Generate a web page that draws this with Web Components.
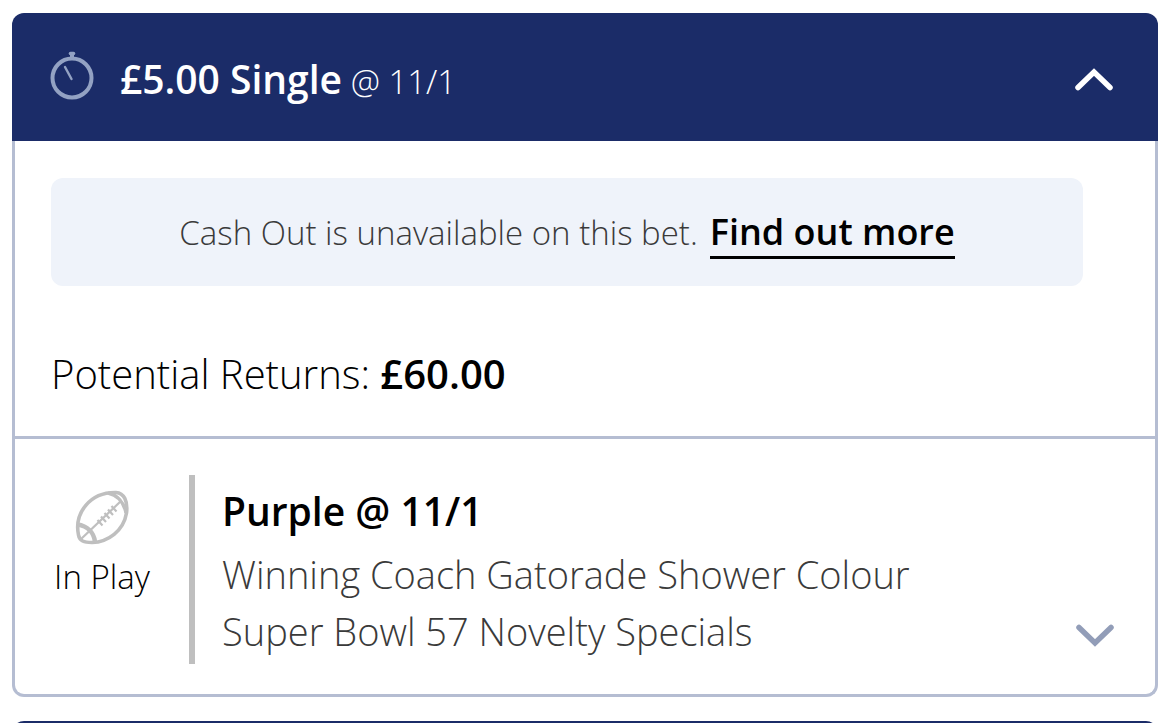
<!DOCTYPE html>
<html lang="en">
<head>
<meta charset="utf-8">
<meta name="viewport" content="width=device-width, initial-scale=1">
<title>My Bets</title>
<style>
    body {
        margin: 0;
        height: 100vh;
        overflow: hidden;
        background: #fff;
        color: #000;
        font-family: "Open Sans", "Noto Sans", sans-serif;
        font-weight: 300;
    }
    main {
        display: flex;
        flex-direction: column;
        gap: 24px;
        box-sizing: border-box;
        height: 100%;
        overflow: hidden;
        padding: 13px 11px 0 12px;
    }
    bet-card {
        flex: none;
    }
</style>
</head>
<body>
<main>
    <bet-card>
        <strong slot="stake">£5.00 Single</strong>
        <span slot="odds">@ 11/1</span>
        <cash-out-notice>
            Cash Out is unavailable on this bet.
            <span slot="action">Find out more</span>
        </cash-out-notice>
        <potential-returns>£60.00</potential-returns>
        <bet-selection slot="selection">
            <span slot="status">In Play</span>
            <span slot="pick">Purple @ 11/1</span>
            <span slot="market">Winning Coach Gatorade Shower Colour</span>
            <span slot="event">Super Bowl 57 Novelty Specials</span>
        </bet-selection>
    </bet-card>
    <bet-card></bet-card>
</main>
<script>
class BetCard extends HTMLElement {
    constructor(){
        super();
        this.attachShadow({mode: 'open'})
        this.shadowRoot.innerHTML = `
            <style>
                :host {
                    display: block;
                }
                .header {
                    display: flex;
                    align-items: center;
                    gap: 24px;
                    box-sizing: border-box;
                    width: 100%;
                    height: 128px;
                    padding: 0 44px 0 36px;
                    border: 0;
                    border-radius: 12px 12px 0 0;
                    background: #1b2c68;
                    color: #fff;
                    font: inherit;
                    font-size: 33px;
                    line-height: 56px;
                    text-align: left;
                }
                .title {
                    flex: 1;
                    padding-top: 6px;
                }
                ::slotted(strong) {
                    font-size: 39px;
                    font-weight: 600;
                }
                .body {
                    border: 3px solid #b5bdd2;
                    border-top: 0;
                    border-radius: 0 0 12px 12px;
                }
                .summary {
                    padding: 37px 72px 34px 36px;
                    border-bottom: 3px solid #b5bdd2;
                }
            </style>
            <button class="header" type="button" aria-expanded="true">
                <stopwatch-icon></stopwatch-icon>
                <span class="title"><slot name="stake"></slot> <slot name="odds"></slot></span>
                <chevron-icon></chevron-icon>
            </button>
            <div class="body">
                <div class="summary"><slot></slot></div>
                <slot name="selection"></slot>
            </div>`;
    }
}

class CashOutNotice extends HTMLElement {
    constructor(){
        super();
        this.attachShadow({mode: 'open'})
        this.shadowRoot.innerHTML = `
            <style>
                :host {
                    display: flex;
                    justify-content: center;
                    align-items: baseline;
                    gap: 12px;
                    box-sizing: border-box;
                    min-height: 108px;
                    padding-top: 30px;
                    border-radius: 12px;
                    background: #eff3fa;
                    color: #3a3a3a;
                    font-size: 33px;
                    line-height: 48px;
                }
                a {
                    border-bottom: 3px solid #000;
                    color: #000;
                    font-size: 36px;
                    font-weight: 600;
                    text-decoration: none;
                }
            </style>
            <span><slot></slot></span>
            <a href="#"><slot name="action"></slot></a>`;
    }
}

class PotentialReturns extends HTMLElement {
    constructor(){
        super();
        this.attachShadow({mode: 'open'})
        this.shadowRoot.innerHTML = `
            <style>
                :host {
                    display: block;
                    padding-top: 60px;
                    font-size: 40px;
                    line-height: 56px;
                }
                strong {
                    font-weight: 600;
                }
            </style>
            Potential Returns: <strong><slot></slot></strong>`;
    }
}

class BetSelection extends HTMLElement {
    constructor(){
        super();
        this.attachShadow({mode: 'open'})
        this.shadowRoot.innerHTML = `
            <style>
                :host {
                    display: flex;
                    padding: 36px 40px 30px 36px;
                }
                .sport {
                    display: flex;
                    flex-direction: column;
                    align-items: center;
                    gap: 8px;
                    box-sizing: border-box;
                    width: 102px;
                    padding-top: 14px;
                    font-size: 33px;
                    line-height: 48px;
                    white-space: nowrap;
                }
                .details {
                    flex: 1;
                    margin-left: 36px;
                    padding: 7px 0 4px 27px;
                    border-left: 6px solid #bfbfbf;
                    color: #3a3a3a;
                    font-size: 38px;
                    line-height: 57px;
                }
                h2 {
                    margin: 0 0 7px;
                    color: #000;
                    font-size: 39px;
                    font-weight: 600;
                    line-height: 57px;
                }
                p {
                    margin: 0;
                }
                button {
                    align-self: flex-end;
                    padding: 0 0 12px;
                    border: 0;
                    background: none;
                    color: #929db8;
                }
            </style>
            <div class="sport">
                <football-icon></football-icon>
                <slot name="status"></slot>
            </div>
            <div class="details">
                <h2><slot name="pick"></slot></h2>
                <p><slot name="market"></slot></p>
                <p><slot name="event"></slot></p>
            </div>
            <button type="button" aria-label="Show details"><chevron-icon down></chevron-icon></button>`;
    }
}

class StopwatchIcon extends HTMLElement {
    constructor(){
        super();
        this.attachShadow({mode: 'open'})
        this.shadowRoot.innerHTML = `
            <style>
                :host, svg {
                    display: block;
                }
            </style>
            <svg width="48" height="54" viewBox="0 0 48 54" fill="none" stroke="#93a2c3" stroke-linecap="round">
                <circle cx="24" cy="28" r="19.5" stroke-width="4"/>
                <path d="M17 17L23.5 29" stroke-width="2.4"/>
                <path d="M22.5 3.500h3" stroke-width="3.6"/>
                <path d="M24 4v4" stroke-width="4" stroke-linecap="butt"/>
            </svg>`;
    }
}

class ChevronIcon extends HTMLElement {
    constructor(){
        super();
        this.attachShadow({mode: 'open'})
        this.shadowRoot.innerHTML = `
            <style>
                :host, svg {
                    display: block;
                }
                :host([down]) svg {
                    transform: rotate(180deg);
                }
            </style>
            <svg width="40" height="28" viewBox="0 0 40 28" fill="none" stroke="currentColor" stroke-width="5.5" stroke-linecap="round">
                <path d="M4 24.500L20 9L36 24.500"/>
            </svg>`;
    }
}

class FootballIcon extends HTMLElement {
    constructor(){
        super();
        this.attachShadow({mode: 'open'})
        this.shadowRoot.innerHTML = `
            <style>
                :host, svg {
                    display: block;
                }
            </style>
            <svg width="56" height="56" viewBox="0 0 56 56" fill="none" stroke="#bfbfbf">
                <path d="M4.500 46C0 24 16 3 42 3.500C50 4 54 12 52.500 24C49.500 42 34 53 18 53.500C10 53.500 5.500 52 4.500 46Z" stroke-width="3.600"/>
                <path d="M3.500 35.500C13 37 20 43 21 53" stroke-width="4.500"/>
                <path d="M34 4C43 6 50 13 52 24" stroke-width="3.500"/>
                <path d="M6 51L47 12" stroke-width="2.200"/>
                <path d="M23.500 31l5 5.500M27 27.500l5 5.500M30.500 24l5 5.500M34 20.500l5 5.500M37.500 17l5 5.500" stroke-width="2.200"/>
            </svg>`;
    }
}

window.customElements.define('stopwatch-icon', StopwatchIcon)
window.customElements.define('chevron-icon', ChevronIcon)
window.customElements.define('football-icon', FootballIcon)
window.customElements.define('cash-out-notice', CashOutNotice)
window.customElements.define('potential-returns', PotentialReturns)
window.customElements.define('bet-selection', BetSelection)
window.customElements.define('bet-card', BetCard)
</script>
</body>
</html>
